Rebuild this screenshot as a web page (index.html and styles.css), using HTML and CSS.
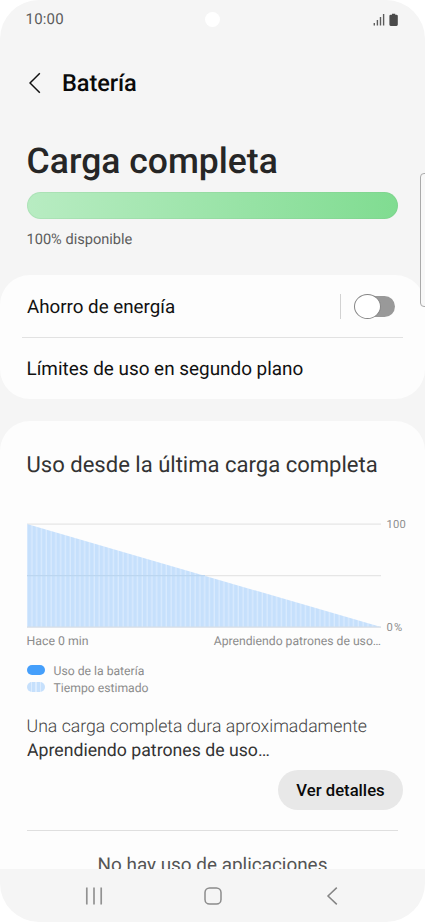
FILE: index.html
```html
<!DOCTYPE html>
<html lang="es">
<head>
<meta charset="utf-8">
<title>Batería</title>
<link rel="stylesheet" href="styles.css">
</head>
<body>
<div class="screen">
  <div class="statusbar">
    <span class="clock">10:00</span>
    <span class="camera"></span>
    <svg class="status-icons" width="26" height="14" viewBox="0 0 26 14">
      <path d="M1.3 10v2.5M4.4 7v5.5M7.5 4v8.5M10.6 1v11.5" stroke="#5c5c5c" stroke-width="1.4"/>
      <path d="M19 .8h3.2v1h1.3q1.3 0 1.3 1.3v8.5q0 1.3-1.3 1.3h-5.8q-1.3 0-1.3-1.3V3.1q0-1.3 1.3-1.3H19z" fill="#4a4a4a"/>
    </svg>
  </div>
  <main class="content">
    <header class="header">
      <svg class="back" width="12" height="22" viewBox="0 0 12 22"><path d="M10.8 1.2L1 11l9.8 9.8" fill="none" stroke="#111" stroke-width="1.5"/></svg>
      <h1 class="title">Batería</h1>
    </header>
    <section class="charge">
      <h2 class="charge-title">Carga completa</h2>
      <div class="charge-bar"></div>
      <p class="charge-text">100% disponible</p>
    </section>
    <section class="card options">
      <div class="row">
        <span class="saver">Ahorro de energía</span>
        <span class="toggle-box"><span class="toggle"></span></span>
      </div>
      <div class="row">Límites de uso en segundo plano</div>
    </section>
    <section class="card usage">
      <h2 class="usage-title">Uso desde la última carga completa</h2>
      <div class="chart">
        <svg class="plot" width="354" height="105" viewBox="0 0 354 105">
          <defs>
            <pattern id="stripes" x="0.8" width="4.8" height="105" patternUnits="userSpaceOnUse">
              <rect width="4.8" height="105" fill="#c6e0fc"/>
              <rect x="3.4" width="1.4" height="105" fill="#d8eafe"/>
            </pattern>
          </defs>
          <path d="M0 1.2h354M0 52.7h354" stroke="#e6e6e6" stroke-width="1.2"/>
          <path d="M0 1L354 104H0z" fill="url(#stripes)"/>
          <path d="M0 52.7h178" stroke="#bcd6f0" stroke-width="1.2"/>
          <path d="M0 104.2h354" stroke="#d6dde6" stroke-width="1.2"/>
        </svg>
        <div class="scale"><span>100</span><span>0<i>%</i></span></div>
      </div>
      <div class="axis"><span class="axis-start">Hace 0 min</span><span>Aprendiendo patrones de uso…</span></div>
      <ul class="legend">
        <li><span class="swatch used"></span><span>Uso de la batería</span></li>
        <li><span class="swatch estimated"></span><span>Tiempo estimado</span></li>
      </ul>
      <p class="estimate">Una carga completa dura aproximadamente<b>Aprendiendo patrones de uso…</b></p>
      <button class="details">Ver detalles</button>
      <p class="empty">No hay uso de aplicaciones</p>
    </section>
  </main>
  <nav class="navbar">
    <svg width="18" height="18" viewBox="0 0 18 18"><path d="M1.8 .5v17M9 .5v17M16.2 .5v17" stroke="#929292" stroke-width="1.7"/></svg>
    <svg width="18" height="18" viewBox="0 0 18 18"><rect x="1" y="1" width="16" height="16" rx="4.6" fill="none" stroke="#8b8b8b" stroke-width="1.5"/></svg>
    <svg width="18" height="18" viewBox="0 0 18 18"><path d="M13.8 .6L5 9l8.8 8.4" fill="none" stroke="#858585" stroke-width="1.5"/></svg>
  </nav>
  <span class="edge-handle"></span>
</div>
</body>
</html>
```
FILE: styles.css
```css
* { box-sizing: border-box; margin: 0; padding: 0; }
body { background: #fff; font-family: Roboto, sans-serif; color: #111; text-rendering: geometricPrecision; }
svg { display: block; flex: none; }
.screen {
  position: relative;
  display: flex;
  flex-direction: column;
  width: 425px;
  height: 922px;
  overflow: hidden;
  border-radius: 39px;
  background: #f5f5f5;
}
.statusbar {
  display: grid;
  grid-template-columns: 1fr 15px 1fr;
  align-items: center;
  flex: none;
  height: 39px;
  padding: 0 26px 0 25px;
}
.clock { margin: -1px 0 0 .5px; font-size: 15px; letter-spacing: .2px; color: #5c5c5c; }
.camera { width: 15px; height: 15px; border-radius: 50%; background: #fff; }
.status-icons { justify-self: end; }
.content { flex: 1; min-height: 0; overflow: hidden; }
.header {
  display: flex;
  align-items: center;
  gap: 21px;
  height: 88px;
  padding: 0 0 1px 29px;
}
.title { font-size: 23.6px; font-weight: 500; line-height: 28px; letter-spacing: -.1px; color: #0a0a0a; }
.charge { height: 148px; padding: 12px 27px 0; }
.charge-title { margin-left: -.4px; font-size: 35.5px; font-weight: 500; line-height: 44px; color: #262626; }
.charge-bar {
  height: 27px;
  margin-top: 9px;
  border: 1px solid rgba(120, 180, 130, .16);
  border-radius: 14px;
  background: linear-gradient(90deg, #b8ecc2, #80dc91) border-box;
}
.charge-text { margin: 10px 0 0 -.5px; font-size: 14.6px; line-height: 20px; color: #5c5c5c; }
.card { border-radius: 30px; background: #fdfdfd; }
.options { height: 124px; padding: 0 22px; }
.row {
  display: flex;
  align-items: center;
  justify-content: space-between;
  height: 62px;
  padding: 0 8px 0 5px;
  font-size: 18.9px;
}
.saver { padding-top: 1px; font-size: 18.75px; }
.row + .row { padding-left: 4.5px; border-top: 1px solid #e2e2e2; }
.toggle-box { padding-left: 13px; border-left: 1px solid #d2d2d2; }
.toggle {
  position: relative;
  display: block;
  width: 41px;
  height: 25px;
  padding: 2px 0 2px 10px;
}
.toggle::after {
  content: "";
  display: block;
  height: 21px;
  border-radius: 10.5px;
  background: #999;
}
.toggle::before {
  content: "";
  position: absolute;
  inset: 0 auto 0 0;
  width: 25px;
  border: 1px solid #858585;
  border-radius: 50%;
  background: #fff;
}
.usage { height: 500px; margin-top: 22px; padding: 30px 22px 0 27px; }
.usage-title { margin-left: -.5px; font-size: 22.05px; font-weight: 400; line-height: 30px; color: #333; }
.chart { display: flex; gap: 5.5px; width: 380px; margin-top: 42px; }
.scale {
  display: flex;
  flex-direction: column;
  justify-content: space-between;
  margin: -5px 0 -7px;
  font-size: 11.2px;
  line-height: 14px;
  letter-spacing: .2px;
  color: #8e8e8e;
}
.scale i { margin-left: 1px; font-style: normal; }
.axis {
  display: flex;
  justify-content: space-between;
  width: 354px;
  margin-top: 5px;
  font-size: 12.2px;
  line-height: 16px;
  color: #8c8c8c;
}
.axis-start { padding-top: 1px; margin: 0 0 -1px -.5px; font-size: 12.3px; }
.legend { margin-top: 13px; list-style: none; font-size: 12.2px; line-height: 17px; color: #8c8c8c; }
.legend li { display: flex; align-items: center; gap: 8.5px; height: 17px; }
.legend li > :last-child { padding-top: 1px; }
.swatch { width: 18px; height: 10px; margin-top: -1px; border-radius: 5px; }
.used { background: #459ffb; }
.estimated { background: repeating-linear-gradient(90deg, #c6e0fc 0 3.6px, #dcecfe 3.6px 4.8px); }
.estimate { margin: 19px 0 0 -.5px; font-size: 17.7px; font-weight: 300; line-height: 24px; color: #444; }
.estimate b { display: block; margin-left: .5px; font-weight: 400; color: #333; }
.details {
  display: block;
  width: 125px;
  height: 40px;
  margin: 7px 0 0 auto;
  border: 0;
  border-radius: 20px;
  background: #e8e8e8;
  font: 500 16.7px Roboto, sans-serif;
  color: #0a0a0a;
}
.empty {
  margin: 20px 5px 0 0;
  padding-top: 23px;
  border-top: 1px solid #dfdfdf;
  font-size: 18.9px;
  line-height: 22px;
  text-align: center;
  color: #555;
}
.navbar {
  display: flex;
  justify-content: space-between;
  flex: none;
  height: 53px;
  padding: 18px 84px 0 85px;
}
.edge-handle {
  position: absolute;
  top: 173px;
  right: -6px;
  width: 11px;
  height: 134px;
  border: 1px solid #aaa;
  border-radius: 4px;
  background: #f8f8f8;
}
```
